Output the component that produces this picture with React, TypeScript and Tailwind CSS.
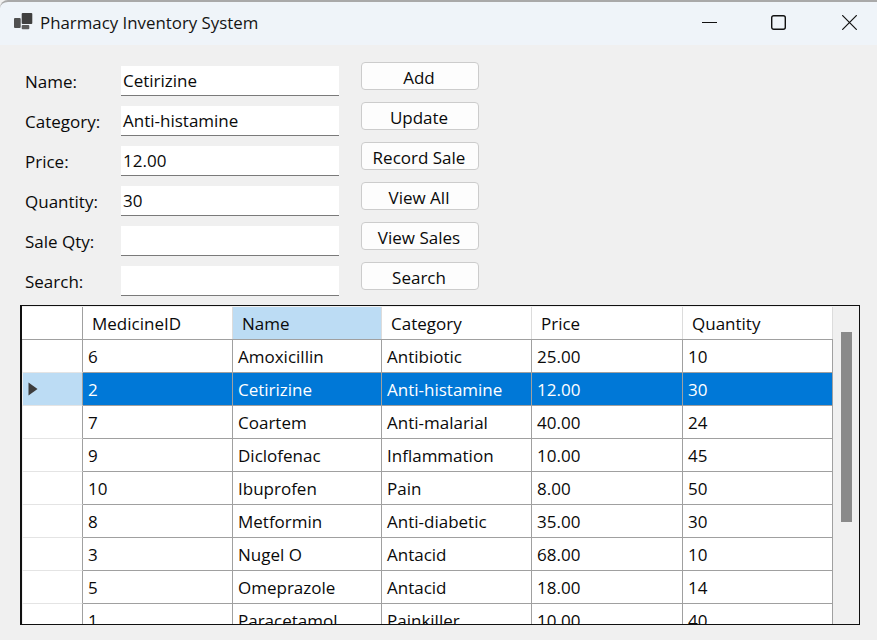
import React from "react";

const fields = [
  ["Name:", "Cetirizine"],
  ["Category:", "Anti-histamine"],
  ["Price:", "12.00"],
  ["Quantity:", "30"],
  ["Sale Qty:", ""],
  ["Search:", ""],
];
const buttons = ["Add", "Update", "Record Sale", "View All", "View Sales", "Search"];
const headers = ["MedicineID", "Name", "Category", "Price", "Quantity"];
const rows = [
  ["6", "Amoxicillin", "Antibiotic", "25.00", "10"],
  ["2", "Cetirizine", "Anti-histamine", "12.00", "30"],
  ["7", "Coartem", "Anti-malarial", "40.00", "24"],
  ["9", "Diclofenac", "Inflammation", "10.00", "45"],
  ["10", "Ibuprofen", "Pain", "8.00", "50"],
  ["8", "Metformin", "Anti-diabetic", "35.00", "30"],
  ["3", "Nugel O", "Antacid", "68.00", "10"],
  ["5", "Omeprazole", "Antacid", "18.00", "14"],
  ["1", "Paracetamol", "Painkiller", "10.00", "40"],
];
const widths = ["w-[150px]", "w-[149px]", "w-[150px]", "w-[151px]", "w-[150px]"];

export default function App() {
  return (
    <div className="w-[877px] h-[640px] bg-[#f0f0f0] overflow-hidden text-[17px] text-[#0a0a0a] font-['Open_Sans','Noto_Sans',sans-serif] flex flex-col">
      <header className="h-[45px] shrink-0 bg-[#eff4f9] border-t-2 border-[#a9a9a9] rounded-tl-lg flex items-center pl-[14px] pb-[2px]">
        <svg width="20" height="17" viewBox="0 0 20 17" className="shrink-0 mb-[2px]">
          <rect x="0" y="5" width="6.7" height="10" rx="1" fill="#505050" />
          <rect x="7.7" y="0" width="10.6" height="11" rx="1" fill="#404040" />
          <rect x="7.7" y="12" width="7.6" height="4.3" rx="1" fill="#5c5c5c" />
        </svg>
        <span className="ml-[6px] text-[#141414] text-[16.85px]">Pharmacy Inventory System</span>
        <div className="ml-auto flex items-center">
          <svg width="15" height="15" viewBox="0 0 15 15" className="mr-[54px]">
            <path d="M0 7.5h15" stroke="#111" strokeWidth="1" />
          </svg>
          <svg width="15" height="15" viewBox="0 0 15 15" className="mr-[56px]">
            <rect x="0.7" y="0.7" width="13.6" height="13.6" rx="2" fill="none" stroke="#111" strokeWidth="1.4" />
          </svg>
          <svg width="15" height="15" viewBox="0 0 15 15" className="mr-[20px]">
            <path d="M0.2 0.2l14.6 14.6M14.8 0.2l-14.6 14.6" stroke="#111" strokeWidth="1.2" />
          </svg>
        </div>
      </header>

      <div className="flex pl-[25px] pt-[21px] h-[260px] shrink-0">
        <div className="flex flex-col gap-[10px] w-[314px] shrink-0">
          {fields.map(([label, value]) => (
            <div key={label} className="flex items-center h-[30px]">
              <span className="w-[96px] shrink-0 pt-[2px]">{label}</span>
              <div className="w-[218px] h-[30px] bg-white border-b border-[#7a7a7a] pl-[2px] pt-[1px] flex items-center">{value}</div>
            </div>
          ))}
        </div>
        <div className="flex flex-col gap-[12px] ml-[22px] -mt-[4px]">
          {buttons.map((b) => (
            <div key={b} className="w-[118px] h-[28px] shrink-0 bg-[#fdfdfd] border border-[#cccccc] rounded-[4px] flex items-center justify-center pr-[2px] pt-[3px]">{b}</div>
          ))}
        </div>
      </div>

      <div className="relative ml-[20px] w-[840px] h-[320px] border border-l-2 border-[#101010] pt-[1px] bg-[#f0f0f0] overflow-hidden">
        <div className="flex h-[33px] border-b border-[#a0a0a0] w-[811px] bg-white">
          <div className="w-[61px] shrink-0 border-r border-[#a0a0a0]" />
          {headers.map((h, i) => (
            <div key={h} className={`${widths[i]} shrink-0 border-r border-[#dcdcdc] flex items-center pl-[9px] pt-[2px] ${h === "Name" ? "bg-[#bcdcf4]" : "bg-white"}`}>{h}</div>
          ))}
        </div>
        {rows.map((r, ri) => {
          const sel = ri === 1;
          return (
            <div key={r[0]} className="flex h-[33px] w-[811px] bg-white">
              <div className={`w-[61px] shrink-0 border-l border-r border-b border-l-[#f0f0f0] border-r-[#a0a0a0] border-b-[#e4e4e4] flex items-center pl-[5px] ${sel ? "bg-[#bcdcf4]" : "bg-white"}`}>
                {sel && (
                  <svg width="10" height="14" viewBox="0 0 10 14">
                    <path d="M0.5 0.5l9 6.5-9 6.5z" fill="#3c3c3c" />
                  </svg>
                )}
              </div>
              {r.map((c, i) => (
                <div key={i} className={`${widths[i]} shrink-0 border-r border-b border-[#a0a0a0] flex items-center pl-[5px] pt-[2px] ${sel ? "bg-[#0078d7] text-white" : ""}`}>{c}</div>
              ))}
            </div>
          );
        })}
        <div className="absolute left-[819px] top-[26px] w-[11px] h-[190px] bg-[#8a8a8a]" />
      </div>
    </div>
  );
}
